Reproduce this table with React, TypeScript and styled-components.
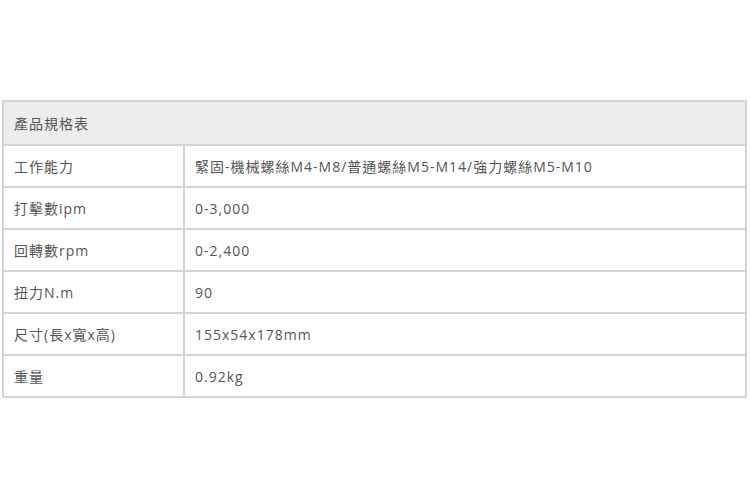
import { createGlobalStyle } from "styled-components";
import styled from "styled-components";

const GlobalStyle = createGlobalStyle`
  html, body {
    margin: 0;
    padding: 0;
    background: #ffffff;
  }
  body {
    font-family: "Open Sans", "Noto Sans CJK TC", sans-serif;
  }
`;

const Page = styled.div`
  width: 750px;
  height: 500px;
  padding: 100px 3px 0 2px;
  box-sizing: border-box;
`;

const SpecTable = styled.table`
  width: 100%;
  border-collapse: collapse;
  border: 2px solid #d4d4d4;
  color: #555555;
  font-size: 14px;
`;

const HeadCell = styled.th`
  height: 42px;
  padding: 0 10px;
  text-align: left;
  font-weight: 400;
  letter-spacing: 1px;
  background: #ededed;
  border-bottom: 2px solid #d4d4d4;
`;

const Row = styled.tr`
  border-bottom: 2px solid #d4d4d4;
`;

const Cell = styled.td<{ $label?: boolean }>`
  height: 40px;
  padding: 0 10px;
  width: ${p => (p.$label ? "159px" : "auto")};
  border-right: ${p => (p.$label ? "2px solid #d4d4d4" : "none")};
  letter-spacing: 1px;
`;

const specs: [string, string][] = [
  ["工作能力", "緊固-機械螺絲M4-M8/普通螺絲M5-M14/強力螺絲M5-M10"],
  ["打擊數ipm", "0-3,000"],
  ["回轉數rpm", "0-2,400"],
  ["扭力N.m", "90"],
  ["尺寸(長x寬x高)", "155x54x178mm"],
  ["重量", "0.92kg"],
];

export default function App() {
  return (
    <>
      <GlobalStyle />
      <Page>
        <SpecTable>
          <thead>
            <tr>
              <HeadCell colSpan={2}>產品規格表</HeadCell>
            </tr>
          </thead>
          <tbody>
            {specs.map(([label, value]) => (
              <Row key={label}>
                <Cell $label>{label}</Cell>
                <Cell>{value}</Cell>
              </Row>
            ))}
          </tbody>
        </SpecTable>
      </Page>
    </>
  );
}
